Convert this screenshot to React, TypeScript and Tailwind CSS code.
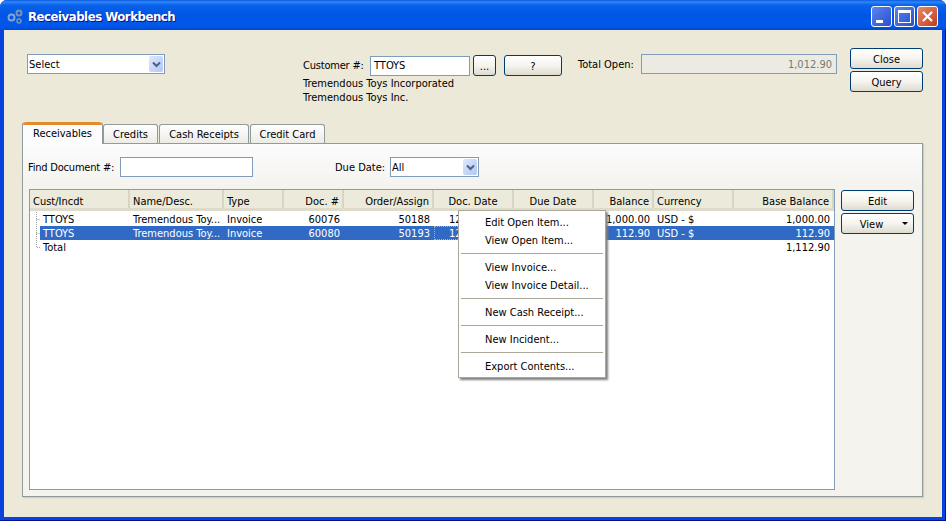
const font = { fontFamily: '"DejaVu Sans Condensed", "Noto Sans", Tahoma, sans-serif' };

const columns = [
  { label: "Cust/Incdt", width: "w-[100px]", right: false },
  { label: "Name/Desc.", width: "w-[94px]", right: false },
  { label: "Type", width: "w-[60px]", right: false },
  { label: "Doc. #", width: "w-[60px]", right: true },
  { label: "Order/Assign", width: "w-[90px]", right: true },
  { label: "Doc. Date", width: "w-[80px]", center: true },
  { label: "Due Date", width: "w-[80px]", center: true },
  { label: "Balance", width: "w-[60px]", right: true },
  { label: "Currency", width: "w-[80px]", right: false },
  { label: "Base Balance", width: "w-[100px]", right: true },
];

const rows = [
  ["TTOYS", "Tremendous Toy...", "Invoice", "60076", "50188", "12", "", "1,000.00", "USD - $", "1,000.00"],
  ["TTOYS", "Tremendous Toy...", "Invoice", "60080", "50193", "12", "", "112.90", "USD - $", "112.90"],
  ["Total", "", "", "", "", "", "", "", "", "1,112.90"],
];

const menu = [
  ["Edit Open Item...", "View Open Item..."],
  ["View Invoice...", "View Invoice Detail..."],
  ["New Cash Receipt..."],
  ["New Incident..."],
  ["Export Contents..."],
];

function XpButton({ className, children }: { className: string; children: React.ReactNode }) {
  return (
    <div
      className={`flex items-center justify-center rounded-[3px] border border-[#003c74] bg-gradient-to-b from-white via-[#f5f4ee] to-[#dedbd0] pt-[2px] text-[11px] text-black ${className}`}
    >
      {children}
    </div>
  );
}

function ComboArrow() {
  return (
    <div className="flex h-[16px] w-[14px] items-center justify-center rounded-[2px] bg-gradient-to-br from-[#dfe8fc] to-[#b3c6f4]">
      <svg width="9" height="7" viewBox="0 0 9 7">
        <path d="M1 1.5 L4.5 5 L8 1.5" fill="none" stroke="#4d6185" strokeWidth="2" />
      </svg>
    </div>
  );
}

function Combo({ value, className }: { value: string; className: string }) {
  return (
    <div className={`flex h-[20px] items-center justify-between border border-[#7f9db9] bg-white pl-[1px] pr-[1px] text-[11px] ${className}`}>
      <span className="pt-[1px]">{value}</span>
      <ComboArrow />
    </div>
  );
}

function GearIcon() {
  return (
    <svg width="16" height="16" viewBox="0 0 16 16" className="mr-[5px]">
      <circle cx="4.5" cy="9.5" r="3" fill="none" stroke="#8ba3c7" strokeWidth="2" />
      <circle cx="12" cy="5" r="2.5" fill="none" stroke="#7c93b5" strokeWidth="2" />
      <circle cx="12" cy="13" r="2" fill="none" stroke="#7c93b5" strokeWidth="1.5" />
    </svg>
  );
}

function WindowButton({ className, children }: { className: string; children: React.ReactNode }) {
  return (
    <div className={`flex h-[21px] w-[21px] items-center justify-center rounded-[3px] border border-white ${className}`}>
      {children}
    </div>
  );
}

function TreeMark({ last }: { last: boolean }) {
  return (
    <svg width="10" height="14" viewBox="0 0 10 14" className="shrink-0">
      <path d={last ? "M6.5 0 V7.5 H10" : "M6.5 0 V14 M6.5 7.5 H10"} fill="none" stroke="#a0a0a0" strokeDasharray="1 1" />
    </svg>
  );
}

function Tab({ label, active, className }: { label: string; active?: boolean; className: string }) {
  if (active) {
    return (
      <div className={`z-10 mb-[-1px] flex h-[22px] flex-col rounded-t-[3px] border-x border-[#919b9c] bg-[#fcfcfe] ${className}`}>
        <div className="h-[3px] rounded-t-[3px] bg-[#e68b2c]" />
        <div className="flex flex-1 items-center justify-center pb-[2px]">{label}</div>
      </div>
    );
  }
  return (
    <div className={`mt-[2px] flex h-[19px] items-center justify-center rounded-t-[3px] border border-b-0 border-[#919b9c] bg-gradient-to-b from-white to-[#ecebe5] pt-[2px] ${className}`}>
      {label}
    </div>
  );
}

export default function App() {
  return (
    <div
      style={font}
      className="relative flex h-[521px] w-[946px] flex-col overflow-hidden rounded-t-[7px] bg-[#0843dd] text-[11px] leading-[14px] text-black shadow-[inset_0_-1px_#00138c,inset_-1px_0_#00138c]"
    >
      {/* title bar */}
      <div className="flex h-[30px] shrink-0 items-center bg-[linear-gradient(to_bottom,#0a5be0_0px,#2f86f8_2px,#0a62ea_5px,#0055e5_15px,#0058ea_26px,#0048d0_30px)] pl-[7px] pr-[8px] pt-[2px]">
        <GearIcon />
        <span className="pt-[2px] text-[13px] font-bold tracking-[-0.45px] text-white [text-shadow:1px_1px_#0f1089]">Receivables Workbench</span>
        <div className="ml-auto flex gap-[2px]">
          <WindowButton className="bg-gradient-to-br from-[#5a85ee] to-[#2a4fcf]">
            <div className="mr-[4px] mt-[10px] h-[3px] w-[7px] bg-white" />
          </WindowButton>
          <WindowButton className="bg-gradient-to-br from-[#5a85ee] to-[#2a4fcf]">
            <div className="h-[13px] w-[13px] border border-t-[3px] border-white" />
          </WindowButton>
          <WindowButton className="bg-gradient-to-br from-[#e8886a] to-[#c13a12]">
            <svg width="13" height="13" viewBox="0 0 13 13">
              <path d="M2 2 L11 11 M11 2 L2 11" stroke="white" strokeWidth="2.2" />
            </svg>
          </WindowButton>
        </div>
      </div>

      {/* client area */}
      <div className="mx-[4px] mb-[4px] flex flex-1 flex-col bg-[#ece9d8]">
        {/* header form */}
        <div className="flex h-[92px] shrink-0">
          <Combo value="Select" className="ml-[23px] mt-[24px] w-[138px]" />
          <div className="ml-[138px] mt-[25px] flex w-[259px] flex-col">
            <div className="flex items-center">
              <span className="w-[67px] whitespace-nowrap pt-[1px] tracking-[-0.2px]">Customer #:</span>
              <div className="flex h-[20px] w-[100px] items-center border border-[#7f9db9] bg-white pl-[3px]">TTOYS</div>
              <XpButton className="ml-[3px] h-[21px] w-[23px]">...</XpButton>
              <XpButton className="ml-[8px] h-[21px] w-[58px]">?</XpButton>
            </div>
            <div className="mt-[1px] whitespace-nowrap">Tremendous Toys Incorporated</div>
            <div className="whitespace-nowrap">Tremendous Toys Inc.</div>
          </div>
          <span className="ml-[16px] mt-[28px] w-[63px] whitespace-nowrap">Total Open:</span>
          <div className="mt-[24px] flex h-[20px] w-[196px] items-center justify-end border border-[#7f9db9] bg-[#ebebe4] pr-[4px] pt-[2px] text-[#7a7a70]">
            1,012.90
          </div>
          <div className="ml-[13px] mt-[18px] flex w-[73px] flex-col gap-[2px]">
            <XpButton className="h-[21px]">Close</XpButton>
            <XpButton className="h-[21px]">Query</XpButton>
          </div>
        </div>

        {/* tabs */}
        <div className="ml-[18px] w-[901px]">
          <div className="flex h-[21px] items-end">
            <Tab label="Receivables" active className="w-[81px]" />
            <Tab label="Credits" className="w-[55px]" />
            <Tab label="Cash Receipts" className="ml-[1px] w-[90px]" />
            <Tab label="Credit Card" className="ml-[1px] w-[75px]" />
          </div>
          <div className="flex h-[354px] flex-col border border-[#919b9c] bg-gradient-to-b from-[#fcfcfe] to-[#f4f3ee] to-[12%] shadow-[1px_1px_1px_#d0cdbc]">
            <div className="mt-[13px] flex h-[20px] shrink-0 items-center pl-[5px]">
              <span className="w-[92px] whitespace-nowrap pt-[2px] tracking-[-0.2px]">Find Document #:</span>
              <div className="h-[20px] w-[133px] border border-[#7f9db9] bg-white" />
              <span className="ml-[82px] w-[55px] whitespace-nowrap pt-[2px]">Due Date:</span>
              <Combo value="All" className="w-[89px]" />
            </div>
            <div className="mt-[12px] flex min-h-0 flex-1 pb-[6px] pl-[6px]">
              {/* table */}
              <div className="h-[301px] w-[806px] shrink-0 border border-[#7f9db9] bg-white">
                <div className="flex h-[21px] bg-[#ebeadb] shadow-[inset_0_-3px_0_#dedbcb]">
                  {columns.map((c) => (
                    <div
                      key={c.label}
                      className={`flex h-[18px] items-center whitespace-nowrap border-r-2 border-r-[#d8d5c6] pl-[3px] pr-[3px] pt-[5px] ${c.width} ${
                        c.right ? "justify-end" : c.center ? "justify-center" : ""
                      }`}
                    >
                      {c.label}
                    </div>
                  ))}
                </div>
                <div className="pt-[1px]">
                  {rows.map((row, r) => (
                    <div key={r} className="flex h-[14px]">
                      <TreeMark last={r === 2} />
                      {row.map((cell, i) => (
                        <div
                          key={i}
                          className={`flex h-[14px] items-start overflow-hidden whitespace-nowrap pr-[4px] pt-[1px] ${
                            i === 0 ? "w-[90px] pl-[3px]" : i === 5 ? "w-[80px] pl-[15px]" : `pl-[3px] ${columns[i].width}`
                          } ${columns[i].right ? "justify-end" : ""} ${r === 1 ? "bg-[#316ac5] text-white" : ""} ${
                            r === 1 && i === 5 ? "outline-1 -outline-offset-1 outline-dotted outline-[#eba646]" : ""
                          }`}
                        >
                          {cell}
                        </div>
                      ))}
                    </div>
                  ))}
                </div>
              </div>
              {/* side buttons */}
              <div className="ml-[6px] mt-[1px] flex w-[73px] flex-col gap-[2px]">
                <XpButton className="h-[21px]">Edit</XpButton>
                <XpButton className="relative h-[21px] pr-[12px]">
                  View
                  <span className="absolute right-[5px] top-[8px] h-0 w-0 border-x-[3px] border-t-[3px] border-x-transparent border-t-black" />
                </XpButton>
              </div>
            </div>
          </div>
        </div>
      </div>

      {/* context menu */}
      <div className="absolute left-[458px] top-[210px] w-[148px] border border-[#aca899] bg-white py-[2px] shadow-[2px_2px_2px_#808080]">
        {menu.map((group, g) => (
          <div key={g}>
            {g > 0 && <div className="mx-[2px] my-[4px] h-px bg-[#aca899]" />}
            {group.map((item) => (
              <div key={item} className="flex h-[18px] items-center whitespace-nowrap pl-[26px] pt-[2px]">
                {item}
              </div>
            ))}
          </div>
        ))}
      </div>
    </div>
  );
}
